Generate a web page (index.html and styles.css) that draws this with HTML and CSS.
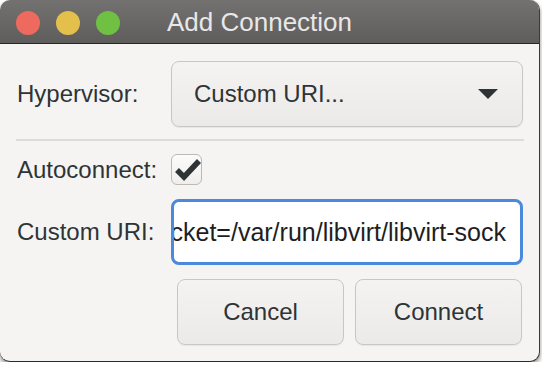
FILE: index.html
```html
<!DOCTYPE html>
<html lang="en">
<head>
  <meta charset="UTF-8" />
  <title>Add Connection</title>
  <link rel="stylesheet" href="styles.css">
</head>
<body>
  <div class="window">
    <div class="titlebar">
      <div class="lights">
        <span class="light red"></span>
        <span class="light yellow"></span>
        <span class="light green"></span>
      </div>
      <div class="title">Add Connection</div>
    </div>
    <div class="content">
      <div class="row row-tall">
        <div class="label">Hypervisor:</div>
        <div class="combo">
          <span>Custom URI...</span>
          <svg class="arrow" width="20" height="10" viewBox="0 0 20 10"><polygon points="0,0 20,0 10,10" fill="#2e3436"/></svg>
        </div>
      </div>
      <div class="separator"></div>
      <div class="row row-check">
        <div class="label">Autoconnect:</div>
        <div class="check">
          <svg width="31" height="31" viewBox="0 0 31 31"><polyline points="6,16 13,23 28,7" fill="none" stroke="#2e3436" stroke-width="5.5" stroke-linejoin="miter"/></svg>
        </div>
      </div>
      <div class="row row-tall">
        <div class="label">Custom URI:</div>
        <div class="entry"><span>cket=/var/run/libvirt/libvirt-sock</span></div>
      </div>
      <div class="row row-tall">
        <div class="label"></div>
        <div class="buttons">
          <div class="button">Cancel</div>
          <div class="button">Connect</div>
        </div>
      </div>
    </div>
  </div>
</body>
</html>
```

FILE: styles.css
```css
body {
  margin: 0;
  background: #fff;
  font-family: "Liberation Sans", Arial, sans-serif;
  overflow: hidden;
}
.window {
  width: 539px;
  height: 361px;
  background: #f5f4f2;
  border-right: 1px solid #3a3a3a;
  border-bottom: 1px solid #2a2a2a;
  border-radius: 10px;
  box-shadow: 0 3px 5px rgba(0,0,0,0.45);
  overflow: hidden;
}
.titlebar {
  height: 41px;
  padding-top: 2px;
  background: linear-gradient(#747271, #5f5d5c);
  border-bottom: 1px solid #262626;
  display: flex;
  align-items: center;
}
.lights {
  display: flex;
  gap: 16px;
  padding-left: 16px;
}
.light {
  width: 24px;
  height: 24px;
  border-radius: 50%;
}
.red { background: #ee6a5f; }
.yellow { background: #e3c04c; }
.green { background: #6fc043; }
.title {
  margin-left: 47px;
  color: #e8e8e8;
  font-size: 26px;
}
.content {
  display: flex;
  flex-direction: column;
  padding: 17px 16px 0 17px;
}
.row {
  display: flex;
  align-items: center;
}
.row-tall {
  height: 66px;
  margin-bottom: 14px;
}
.row-check {
  height: 31px;
  margin-bottom: 14px;
}
.label {
  width: 154px;
  font-size: 24px;
  color: #2e3436;
}
.combo {
  display: flex;
  align-items: center;
  justify-content: space-between;
  padding: 0 24px 0 22px;
  box-sizing: border-box;
  width: 352px;
  height: 66px;
  border: 1px solid #cbc6c1;
  border-radius: 8px;
  background: linear-gradient(#f4f3f2, #ebeae8);
  box-shadow: 0 1px 1px rgba(0,0,0,0.06);
  font-size: 24px;
  color: #2e3436;
}
.separator {
  height: 2px;
  background: #dedad6;
  margin: -2px 0 13px -1px;
  width: 508px;
}
.check {
  width: 31px;
  height: 31px;
  box-sizing: border-box;
  border: 1px solid #bdb8b2;
  border-radius: 6px;
  background: linear-gradient(#fbfbfa, #efeeec);
  position: relative;
}
.check svg {
  position: absolute;
  left: -1px;
  top: -1px;
}
.entry {
  width: 352px;
  height: 66px;
  box-sizing: border-box;
  border: 3px solid #4a89dc;
  border-radius: 8px;
  background: #fff;
  display: flex;
  align-items: center;
  justify-content: flex-end;
  overflow: hidden;
  padding-right: 14px;
  white-space: nowrap;
  font-size: 25px;
  color: #1e1e1e;
}
.buttons {
  display: flex;
  gap: 11px;
  margin-left: 6px;
}
.button {
  width: 167px;
  height: 66px;
  box-sizing: border-box;
  border: 1px solid #cbc6c1;
  border-radius: 8px;
  background: linear-gradient(#f4f3f2, #ebeae8);
  box-shadow: 0 1px 1px rgba(0,0,0,0.06);
  display: flex;
  align-items: center;
  justify-content: center;
  font-size: 24px;
  color: #2e3436;
}
```
